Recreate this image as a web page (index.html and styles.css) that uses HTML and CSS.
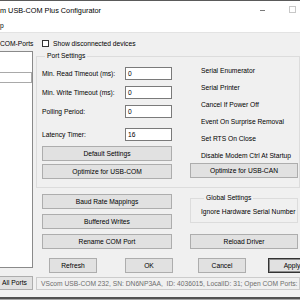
FILE: index.html
```html
<!DOCTYPE html>
<html>
<head>
<meta charset="utf-8">
<link rel="stylesheet" href="styles.css">
</head>
<body>
<div class="win">
  <div class="topline"></div>
  <div class="titlebar">
    <span class="title">m USB-COM Plus Configurator</span>
    <span class="min"></span>
    <span class="max"></span>
  </div>
  <div class="menubar">p</div>
  <div class="sep"></div>
  <div class="optrow">
    <span class="comlabel">COM-Ports</span>
    <span class="check"></span>
    <span class="checktext">Show disconnected devices</span>
  </div>
  <div class="main">
    <div class="list">
      <div class="row"></div>
    </div>
    <div class="panel">
      <fieldset class="group">
        <legend>Port Settings</legend>
        <div class="cols">
          <div class="leftcol">
            <div class="field"><span>Min. Read Timeout (ms):</span><span class="tb">0</span></div>
            <div class="field f2"><span>Min. Write Timeout (ms):</span><span class="tb">0</span></div>
            <div class="field f2"><span>Polling Period:</span><span class="tb">0</span></div>
            <div class="field f4"><span>Latency Timer:</span><span class="tb">16</span></div>
            <button class="btn b1">Default Settings</button>
            <button class="btn b2">Optimize for USB-COM</button>
          </div>
          <div class="rightcol">
            <div class="opt">Serial Enumerator</div>
            <div class="opt">Serial Printer</div>
            <div class="opt">Cancel If Power Off</div>
            <div class="opt">Event On Surprise Removal</div>
            <div class="opt">Set RTS On Close</div>
            <div class="opt last">Disable Modem Ctrl At Startup</div>
            <button class="btn">Optimize for USB-CAN</button>
          </div>
        </div>
      </fieldset>
      <div class="lower">
        <div class="stack">
          <button class="btn">Baud Rate Mappings</button>
          <button class="btn">Buffered Writes</button>
          <button class="btn">Rename COM Port</button>
        </div>
        <div class="rstack">
          <fieldset class="group global">
            <legend>Global Settings</legend>
            <div class="gopt">Ignore Hardware Serial Number</div>
          </fieldset>
          <button class="btn reload">Reload Driver</button>
        </div>
      </div>
      <div class="actions">
        <button class="btn act refresh">Refresh</button>
        <button class="btn act ok">OK</button>
        <button class="btn act cancel">Cancel</button>
        <button class="btn act apply">Apply</button>
      </div>
    </div>
  </div>
  <div class="bottom">
    <button class="btn allports">All Ports</button>
    <div class="status">VScom USB-COM 232, SN: DN6NP3AA,&nbsp; ID: 4036015, LocalID: 31; Open COM Ports:</div>
  </div>
  <div class="bottomline"></div>
</div>
</body>
</html>
```
FILE: styles.css
```css
html, body {
  margin: 0;
  padding: 0;
}
body {
  width: 300px;
  height: 300px;
  overflow: hidden;
  background: #f0f0f0;
  font-family: "Liberation Sans", Arial, sans-serif;
  font-size: 6.7px;
  color: #000;
}
.win {
  display: flex;
  flex-direction: column;
  height: 300px;
  width: 300px;
  overflow: hidden;
}
.win > * {
  flex: none;
}
.topline {
  height: 1px;
  background: #5a5a5a;
}
.titlebar {
  height: 19px;
  background: #fff;
  display: flex;
  align-items: center;
  font-size: 7.3px;
  white-space: nowrap;
}
.title {
  flex: 1;
}
.min {
  width: 5px;
  height: 1px;
  background: #7a7a7a;
  margin-right: 24px;
}
.max {
  width: 7px;
  height: 7px;
  box-sizing: border-box;
  border: 1px solid #c8c8c8;
  margin-right: 4px;
  margin-bottom: 2px;
}
.menubar {
  height: 12px;
  line-height: 12px;
  background: #fff;
}
.sep {
  height: 1px;
  background: #e3e3e3;
}
.optrow {
  height: 18px;
  box-sizing: border-box;
  padding-top: 3px;
  display: flex;
  align-items: center;
  white-space: nowrap;
}
.comlabel {
  width: 36px;
}
.check {
  width: 7px;
  height: 7px;
  box-sizing: border-box;
  border: 1px solid #333;
  background: #fff;
  margin-left: 6px;
}
.checktext {
  margin-left: 4px;
}
.main {
  display: flex;
  align-items: flex-start;
}
.list {
  width: 33px;
  height: 217px;
  box-sizing: border-box;
  border: 1px solid #8a8a8a;
  border-left: none;
  background: #fff;
  padding-top: 20px;
  flex: none;
}
.row {
  width: 32px;
  height: 11px;
  box-sizing: border-box;
  border: 1px solid #a9a9a9;
  border-left: none;
}
.panel {
  margin-left: 3px;
  width: 264px;
  flex: none;
}
.group {
  margin: 1px 0 0;
  padding: 7px 1px 8px 5px;
  border: 1px solid #dcdcdc;
  min-width: 0;
  white-space: nowrap;
}
.group legend {
  margin-left: 3px;
  padding: 0 2px;
  line-height: 8px;
}
.cols, .lower {
  display: grid;
  grid-template-columns: 130px 108px;
  column-gap: 18px;
}
.leftcol, .rightcol, .stack, .rstack {
  display: flex;
  flex-direction: column;
}
.field {
  display: flex;
  justify-content: space-between;
  align-items: center;
  height: 13px;
}
.f2 {
  margin-top: 6px;
}
.f4 {
  margin-top: 10px;
}
.tb {
  width: 47px;
  height: 13px;
  box-sizing: border-box;
  border: 1px solid #7a7a7a;
  background: #fff;
  padding-left: 2px;
  line-height: 11px;
}
.btn {
  display: block;
  width: 100%;
  height: 15px;
  box-sizing: border-box;
  border: 1px solid #adadad;
  background: #e1e1e1;
  font: inherit;
  color: #000;
  text-align: center;
  line-height: 13px;
  padding: 0;
  margin: 0;
  white-space: nowrap;
  overflow: hidden;
}
.b1 {
  margin-top: 5px;
}
.b2 {
  margin-top: 3px;
}
.opt {
  line-height: 8px;
  padding-left: 11px;
  margin-bottom: 9px;
}
.opt.last {
  margin-bottom: 3px;
}
.lower {
  padding-left: 6px;
  margin-top: 6px;
}
.stack {
  gap: 5px;
}
.global {
  margin: 0;
  padding: 6px 0 6px 10px;
}
.gopt {
  line-height: 8px;
}
.reload {
  margin-top: 11px;
}
.actions {
  display: flex;
  margin-top: 9px;
}
.act {
  width: 48px;
  flex: none;
}
.refresh {
  margin-left: 13px;
}
.ok {
  margin-left: 28px;
}
.cancel {
  margin-left: 25px;
}
.apply {
  margin-left: 22px;
  border: 1px solid #333;
  box-shadow: inset 0 0 0 1px #8c8c8c;
}
.bottom {
  display: flex;
  align-items: flex-start;
  margin-top: 3px;
  height: 14px;
}
.allports {
  width: 33px;
  height: 14px;
  flex: none;
  border-left: none;
  text-align: left;
  padding-left: 2px;
  line-height: 12px;
}
.status {
  margin-left: 3px;
  margin-top: 1px;
  flex: 1;
  height: 13px;
  box-sizing: border-box;
  border: 1px solid #cccccc;
  background: #f0f0f0;
  color: #6d6d6d;
  padding-left: 4px;
  line-height: 11px;
  white-space: nowrap;
  overflow: hidden;
}
.bottomline {
  margin-top: auto;
  height: 2px;
  background: #505050;
  border-bottom: 1px solid #a5a5a5;
}
```
